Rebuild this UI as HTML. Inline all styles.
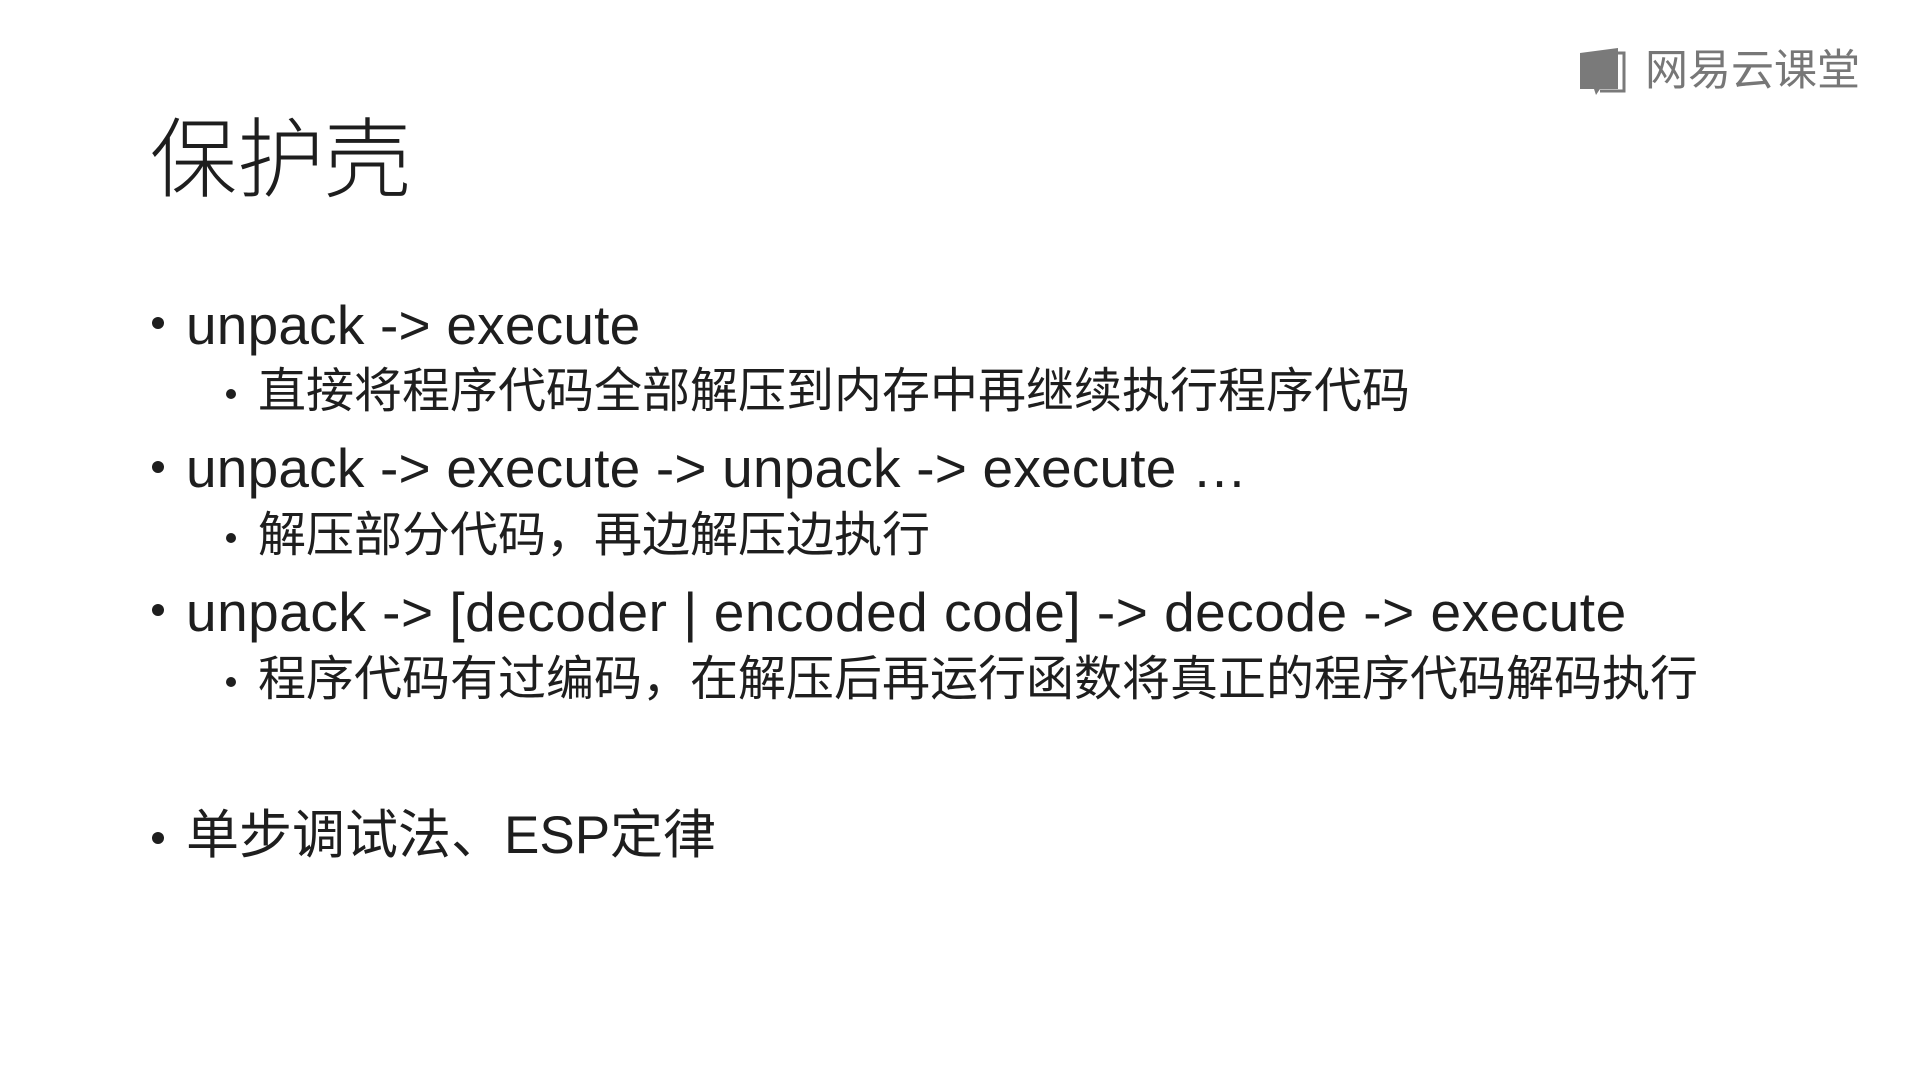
<!DOCTYPE html>
<html><head><meta charset="utf-8"><style>
html,body{margin:0;padding:0;width:1920px;height:1080px;background:#fff;overflow:hidden}
.t{position:absolute;white-space:nowrap;line-height:1;color:#1e1e1e;font-family:"Liberation Sans","Noto Sans CJK SC",sans-serif}
.l1{font-size:55px;letter-spacing:0.2px}
.l2{font-size:48px}
.dot{position:absolute;border-radius:50%;background:#1e1e1e}
</style></head><body>
<div class="t" style="left:150px;top:117px;font-size:87px;font-weight:300">保护壳</div>

<div class="dot" style="left:152px;top:317px;width:12px;height:12px"></div>
<div class="t l1" style="left:186px;top:298px">unpack -&gt; execute</div>
<div class="dot" style="left:226px;top:389px;width:10px;height:10px"></div>
<div class="t l2" style="left:258px;top:368px">直接将程序代码全部解压到内存中再继续执行程序代码</div>

<div class="dot" style="left:152px;top:461px;width:12px;height:12px"></div>
<div class="t l1" style="left:186px;top:441px">unpack -&gt; execute -&gt; unpack -&gt; execute …</div>
<div class="dot" style="left:226px;top:533px;width:10px;height:10px"></div>
<div class="t l2" style="left:258px;top:512px">解压部分代码，再边解压边执行</div>

<div class="dot" style="left:152px;top:604px;width:12px;height:12px"></div>
<div class="t l1" style="left:186px;top:585px;letter-spacing:0.5px">unpack -&gt; [decoder | encoded code] -&gt; decode -&gt; execute</div>
<div class="dot" style="left:226px;top:677px;width:10px;height:10px"></div>
<div class="t l2" style="left:258px;top:656px">程序代码有过编码，在解压后再运行函数将真正的程序代码解码执行</div>

<div class="dot" style="left:152px;top:832px;width:12px;height:12px"></div>
<div class="t" style="left:186px;top:809px;font-size:53px">单步调试法、ESP定律</div>

<svg style="position:absolute;left:1578px;top:45px" width="50" height="52" viewBox="0 0 50 52">
<path d="M2 8 L40 3 L40 44 L22 44 L18 50 L16 44 L2 44 Z" fill="#7a7a7a"/>
<path d="M40 8 L46 8 L46 46 L22 46" fill="none" stroke="#7a7a7a" stroke-width="3"/>
</svg>
<div class="t" style="left:1645px;top:50px;font-size:43px;color:#777">网易云课堂</div>
</body></html>
